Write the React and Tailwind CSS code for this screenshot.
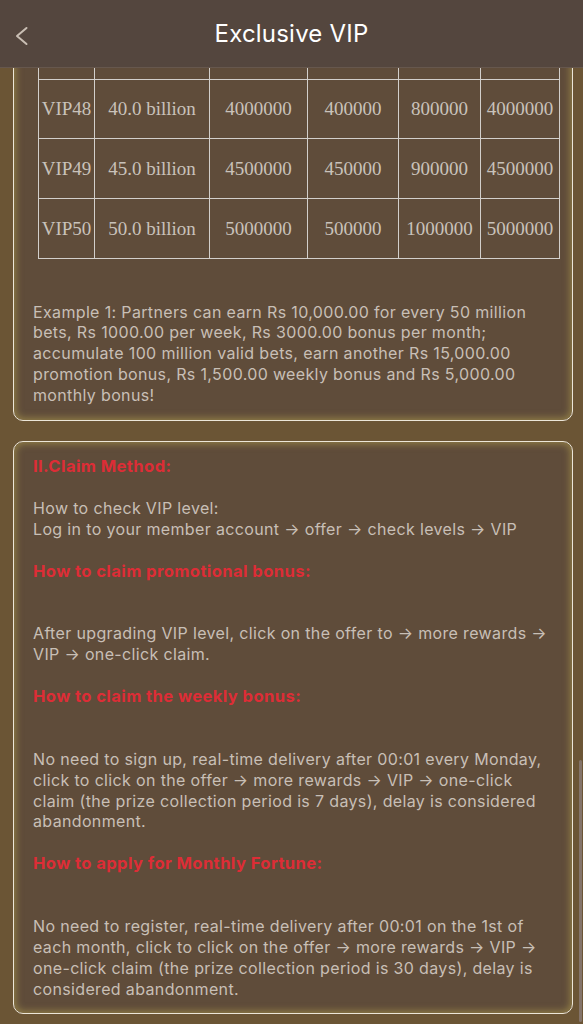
import React from "react";

const rows = [
  ["VIP48", "40.0 billion", "4000000", "400000", "800000", "4000000"],
  ["VIP49", "45.0 billion", "4500000", "450000", "900000", "4500000"],
  ["VIP50", "50.0 billion", "5000000", "500000", "1000000", "5000000"],
];

function Red({ children, className = "" }) {
  return (
    <p className={"text-[16.6px] font-bold tracking-[0.4px] text-[#dd2d36] " + className}>{children}</p>
  );
}

const cell = "whitespace-nowrap border border-[#d2cfcb] p-0 align-middle leading-none";

export default function App() {
  return (
    <div
      className="relative h-[1024px] w-[583px] overflow-hidden bg-[#6b5535] text-[16px] leading-[20.9px] tracking-[0.35px] text-[#c8bfb6]"
      style={{ fontFamily: "Inter, 'Noto Sans', sans-serif" }}
    >
      <header className="relative z-10 flex h-[68px] items-center justify-center border-b border-[#66574d] bg-[#54463e] pt-[2px]">
        <svg
          className="absolute left-[14px] top-[26px]"
          width="16"
          height="20"
          viewBox="0 0 16 20"
          fill="none"
        >
          <polyline
            points="12.5,2 3,10 12.5,18"
            stroke="#c9beb3"
            strokeWidth="2"
            strokeLinecap="round"
            strokeLinejoin="round"
          />
        </svg>
        <h1 className="text-[24px] font-normal tracking-[0.2px] text-white">Exclusive VIP</h1>
      </header>

      <div className="-mt-[70px]">
        <section className="ml-[13px] w-[560px] rounded-[10px] border border-[#ece6d8] bg-[#5f4c3a] px-[19px] pb-[14px] pt-[69px] shadow-[inset_0_0_7px_2px_rgba(185,165,80,0.55)]">
          <table
            className="ml-[5px] w-[521px] table-fixed border-collapse text-center text-[19px] tracking-normal text-[#c9c2ba]"
            style={{ fontFamily: "'Liberation Serif', 'Times New Roman', serif" }}
          >
            <colgroup>
              <col className="w-[56px]" />
              <col className="w-[115px]" />
              <col className="w-[98px]" />
              <col className="w-[91px]" />
              <col className="w-[82px]" />
              <col className="w-[79px]" />
            </colgroup>
            <tbody>
              <tr className="h-[11px]">
                {[0, 1, 2, 3, 4, 5].map((i) => (
                  <td key={i} className={cell + " border-t-0"} />
                ))}
              </tr>
              {rows.map((r) => (
                <tr key={r[0]} className="h-[59.7px]">
                  {r.map((c, i) => (
                    <td key={i} className={cell}>
                      {c}
                    </td>
                  ))}
                </tr>
              ))}
            </tbody>
          </table>
          <p className="mt-[43px]">
            Example 1: Partners can earn Rs 10,000.00 for every 50 million bets, Rs 1000.00 per week, Rs 3000.00 bonus per month; accumulate 100 million valid bets, earn another Rs 15,000.00 promotion bonus, Rs 1,500.00 weekly bonus and Rs 5,000.00 monthly bonus!
          </p>
        </section>

        <section className="ml-[13px] mt-[20px] w-[560px] rounded-[10px] border border-[#ece6d8] bg-[#5f4c3a] px-[19px] pb-[13px] pt-[14px] shadow-[inset_0_0_7px_2px_rgba(185,165,80,0.55)]">
          <Red>II.Claim Method:</Red>
          <p className="mt-[20.9px]">
            How to check VIP level:
            <br />
            Log in to your member account → offer → check levels → VIP
          </p>
          <Red className="mt-[20.9px]">How to claim promotional bonus:</Red>
          <p className="mt-[41.8px]">
            After upgrading VIP level, click on the offer to → more rewards → VIP → one-click claim.
          </p>
          <Red className="mt-[20.9px]">How to claim the weekly bonus:</Red>
          <p className="mt-[41.8px]">
            No need to sign up, real-time delivery after 00:01 every Monday, click to click on the offer → more rewards → VIP → one-click claim (the prize collection period is 7 days), delay is considered abandonment.
          </p>
          <Red className="mt-[20.9px]">How to apply for Monthly Fortune:</Red>
          <p className="mt-[41.8px]">
            No need to register, real-time delivery after 00:01 on the 1st of each month, click to click on the offer → more rewards → VIP → one-click claim (the prize collection period is 30 days), delay is considered abandonment.
          </p>
        </section>
      </div>

      <div className="absolute right-[1px] top-[760px] h-[262px] w-[3px] rounded-full bg-[#84746a]" />
    </div>
  );
}
